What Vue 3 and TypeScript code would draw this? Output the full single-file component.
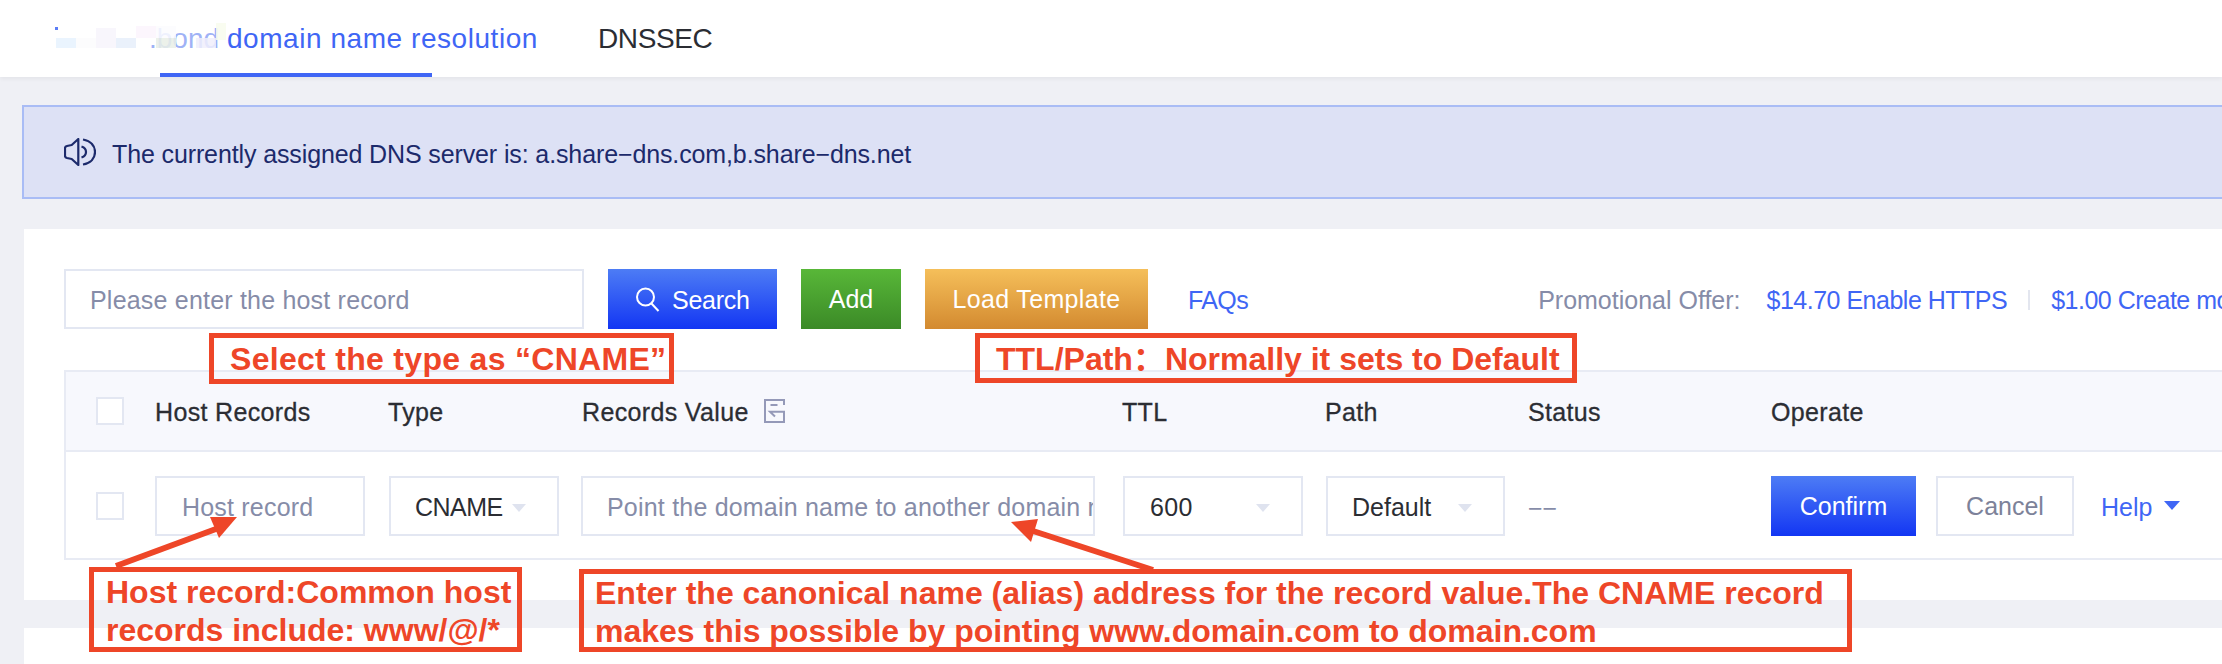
<script setup lang="ts">
const headers = [
  { label: "Host Records", width: 233 },
  { label: "Type", width: 194 },
  { label: "Records Value", width: 540, icon: true },
  { label: "TTL", width: 203 },
  { label: "Path", width: 203 },
  { label: "Status", width: 243 },
  { label: "Operate", width: 300 },
];

const promos = ["$14.70 Enable HTTPS", "$1.00 Create more"];

// pale patches covering the blanked-out start of the first tab
const patches = [
  { x: 55, y: 27, w: 3, h: 3, c: "#3f66f5" },
  { x: 56, y: 38, w: 20, h: 10, c: "#e6f2fe" },
  { x: 76, y: 38, w: 20, h: 10, c: "#fbfbfd" },
  { x: 96, y: 28, w: 20, h: 20, c: "#f7f5fb" },
  { x: 116, y: 38, w: 20, h: 10, c: "#e6eefa" },
  { x: 136, y: 26, w: 20, h: 12, c: "#fbf4fd" },
  { x: 156, y: 26, w: 20, h: 12, c: "#fcfcfe" },
  { x: 156, y: 38, w: 20, h: 10, c: "#e9efe6" },
  { x: 196, y: 38, w: 20, h: 10, c: "#f0effb" },
  { x: 216, y: 23, w: 10, h: 17, c: "#f8fced" },
];
</script>

<template>
  <div class="page">
    <header class="tabs">
      <div class="smudge">
        <em>.bond</em>
        <i
          v-for="(p, i) in patches"
          :key="i"
          :style="{ left: p.x + 'px', top: p.y + 'px', width: p.w + 'px', height: p.h + 'px', background: p.c }"
        ></i>
      </div>
      <div class="tab active"><span>domain name resolution</span></div>
      <div class="tab dnssec">DNSSEC</div>
    </header>

    <div class="notice">
      <svg class="speaker" viewBox="0 0 32 28" fill="none" stroke="#1c2a6b" stroke-width="2.2">
        <path d="M14.3 1 L14.3 27 L7.7 21 L3 20 Q1 19.500 1 18 L1 10 Q1 8.500 3 8 L7.700 7 Z" stroke-linejoin="round" />
        <path d="M19 1.500 C27 3 31 8 31 14 C31 20 27 25 19 26.500" />
        <path d="M17.500 8.500 C20.500 9.500 22 11.500 22 14 C22 16.500 20.500 18.500 17.500 19.500" />
      </svg>
      <span>The currently assigned DNS server is: a.share−dns.com,b.share−dns.net</span>
    </div>

    <section class="card">
      <div class="toolbar">
        <div class="field search-field placeholder"><span>Please enter the host record</span></div>
        <button class="btn blue search-btn">
          <svg width="24" height="25" viewBox="0 0 24 25" fill="none" stroke="#fff" stroke-width="2">
            <circle cx="9.500" cy="10" r="8.500" />
            <path d="M15.500 16.500 L22.500 24" />
          </svg>
          <span class="search-label">Search</span>
        </button>
        <button class="btn green add-btn"><span>Add</span></button>
        <button class="btn orange load-btn"><span>Load Template</span></button>
        <a class="link faq">FAQs</a>
        <span class="promo-label">Promotional Offer:</span>
        <a class="link promo">{{ promos[0] }}</a>
        <span class="divider"></span>
        <a class="link promo">{{ promos[1] }}</a>
      </div>

      <div class="table">
        <div class="row head">
          <span class="check"></span>
          <span v-for="h in headers" :key="h.label" class="th" :style="{ width: h.width + 'px' }">
            {{ h.label }}
            <svg v-if="h.icon" class="col-icon" viewBox="0 0 21 24" fill="none" stroke="#9499b8" stroke-width="2">
              <path d="M20 6 V1 H1 V23 H20 V12.700 H6 L11 17.500" />
              <path d="M6.500 6 H13.500" />
            </svg>
          </span>
        </div>
        <div class="row body">
          <span class="check"></span>
          <div class="field host-field placeholder"><span>Host record</span></div>
          <div class="field select cname-field"><span class="cname">CNAME</span><i class="caret"></i></div>
          <div class="field value-field placeholder"><span>Point the domain name to another domain name</span></div>
          <div class="field select ttl-field"><span class="ttl">600</span><i class="caret"></i></div>
          <div class="field select path-field"><span>Default</span><i class="caret"></i></div>
          <span class="status">−−</span>
          <button class="btn blue confirm-btn"><span>Confirm</span></button>
          <button class="btn plain cancel-btn"><span>Cancel</span></button>
          <a class="link help"><span>Help</span><i class="help-caret"></i></a>
        </div>
      </div>
    </section>

    <div class="gap"></div>
    <div class="next-card"></div>

    <!-- red annotations painted over the screenshot -->
    <div class="note note-type">Select the type as “CNAME”</div>
    <div class="note note-ttl">TTL/Path<span class="cjk">：</span>Normally it sets to Default</div>
    <div class="note note-host">Host record:Common host<br />records include: www/@/*</div>
    <div class="note note-value">
      Enter the canonical name (alias) address for the record value.The CNAME record<br />
      makes this possible by pointing www.domain.com to domain.com
    </div>
    <svg class="arrows" width="2222" height="664" fill="#ee4628" stroke="#ee4628">
      <path d="M116 566 L224 526" stroke-width="6" fill="none" />
      <path d="M237 517 L210 517 L219 538 Z" stroke-width="0" />
      <path d="M1153 570 L1030 530" stroke-width="6" fill="none" />
      <path d="M1011 522 L1038 519 L1031 542 Z" stroke-width="0" />
    </svg>
  </div>
</template>

<style>
html,
body {
  margin: 0;
  background: #eff0f5;
}
</style>

<style scoped>
.page {
  position: relative;
  width: 2222px;
  height: 664px;
  overflow: hidden;
  background: #eff0f5;
  font-family: "Liberation Sans", Arial, sans-serif;
  font-size: 25px;
  color: #2b2d33;
}

.tabs {
  position: relative;
  display: flex;
  height: 77px;
  background: #fff;
  box-shadow: 0 2px 4px rgba(0, 0, 0, 0.05);
  padding-left: 160px;
  gap: 166px;
  font-size: 28px;
}

.tab {
  height: 73px;
  line-height: 78px;
  white-space: nowrap;
}

.tab.active {
  width: 272px;
  color: #3f66f5;
  border-bottom: 4px solid #3f66f5;
  letter-spacing: 0.55px;
}

.tab.active span {
  margin-left: 67px;
}

.dnssec {
  letter-spacing: -0.4px;
}

.smudge {
  position: absolute;
  left: 0;
  top: 0;
}

.smudge em {
  position: absolute;
  left: 149px;
  top: 0;
  font-style: normal;
  line-height: 78px;
  color: #9fb2f6;
}

.smudge i {
  position: absolute;
  display: block;
  opacity: 0.85;
}

.notice {
  display: flex;
  align-items: center;
  height: 94px;
  box-sizing: border-box;
  margin: 28px 0 30px 22px;
  padding-left: 40px;
  background: #dde1f5;
  border: 2px solid #a9bcf5;
  border-right: none;
  color: #1c2a6b;
  white-space: pre;
}

.notice span {
  padding-top: 5px;
  letter-spacing: -0.12px;
}

.speaker {
  width: 32px;
  height: 28px;
  margin-right: 16px;
}

.card {
  margin-left: 24px;
  height: 371px;
  background: #fff;
  padding: 40px 0 0 40px;
  box-sizing: border-box;
}

.toolbar {
  display: flex;
  align-items: center;
  height: 60px;
  white-space: nowrap;
}

.toolbar > a,
.toolbar > .promo-label {
  padding-top: 2px;
}

.field {
  display: flex;
  align-items: center;
  flex-shrink: 0;
  box-sizing: border-box;
  height: 60px;
  background: #fff;
  border: 2px solid #e3e7f2;
  overflow: hidden;
  white-space: nowrap;
}

.field span,
.btn span {
  padding-top: 2px;
}

.placeholder {
  color: #868ca8;
  letter-spacing: 0.2px;
}

.search-field {
  width: 520px;
  padding-left: 24px;
  margin-right: 24px;
}

.btn {
  flex-shrink: 0;
  box-sizing: border-box;
  height: 60px;
  border: none;
  padding: 0;
  font: inherit;
  color: #fff;
}

.blue {
  background: linear-gradient(#4d7cf5, #1336f3);
}

.green {
  background: linear-gradient(#58b738, #3b8a27);
}

.orange {
  background: linear-gradient(#f5bf5a, #d38a30);
}

.plain {
  background: #fff;
  border: 2px solid #e3e7f2;
  color: #7d8299;
}

.search-btn {
  display: flex;
  align-items: center;
  gap: 12px;
  width: 169px;
  margin-right: 24px;
  padding-left: 28px;
}

.search-label {
  letter-spacing: -0.25px;
}

.add-btn {
  width: 100px;
  margin-right: 24px;
}

.load-btn {
  width: 223px;
  margin-right: 40px;
  letter-spacing: 0.35px;
}

.link {
  color: #3f66f5;
}

.faq {
  margin-right: 290px;
  letter-spacing: -0.6px;
}

.promo-label {
  flex-shrink: 0;
  color: #868ca8;
  margin-right: 26px;
}

.promo {
  flex-shrink: 0;
  letter-spacing: -0.5px;
}

.divider {
  flex-shrink: 0;
  width: 2px;
  height: 20px;
  background: #e3e6ef;
  margin: 2px 21px 0;
}

.table {
  margin-top: 41px;
  border: 2px solid #e8ebf4;
  border-right: none;
}

.row {
  display: flex;
  align-items: center;
  padding-left: 30px;
}

.head {
  height: 78px;
  background: #f7f8fd;
  border-bottom: 2px solid #e8ebf4;
}

.body {
  box-sizing: border-box;
  height: 106px;
  padding-top: 2px;
}

.check {
  flex-shrink: 0;
  box-sizing: border-box;
  width: 28px;
  height: 28px;
  margin-right: 31px;
  background: #fff;
  border: 2px solid #e3e7f2;
}

.th {
  display: flex;
  align-items: center;
  flex-shrink: 0;
  color: #2b2d33;
  letter-spacing: 0.35px;
  padding-top: 2px;
  -webkit-text-stroke: 0.3px #2b2d33;
}

.col-icon {
  width: 21px;
  height: 24px;
  margin-left: 15px;
  margin-bottom: 2px;
}

.host-field {
  width: 210px;
  padding-left: 25px;
  margin-right: 24px;
}

.select {
  position: relative;
  padding-left: 24px;
}

.cname {
  letter-spacing: -0.5px;
}

.ttl {
  letter-spacing: 0.3px;
}

.cname-field {
  width: 170px;
  margin-right: 22px;
}

.value-field {
  width: 514px;
  padding-left: 24px;
  margin-right: 28px;
}

.ttl-field {
  width: 180px;
  padding-left: 25px;
  margin-right: 23px;
}

.path-field {
  width: 179px;
  padding-left: 24px;
  margin-right: 23px;
}

.caret {
  position: absolute;
  right: 31px;
  top: 26px;
  border-left: 7.5px solid transparent;
  border-right: 7.5px solid transparent;
  border-top: 8px solid #dfe3ef;
}

.status {
  width: 243px;
  flex-shrink: 0;
  padding-top: 4px;
  color: #868ca8;
}

.confirm-btn {
  width: 145px;
  margin-right: 20px;
}

.cancel-btn {
  width: 138px;
  margin-right: 27px;
}

.help {
  display: flex;
  align-items: center;
  padding-top: 2px;
}

.help-caret {
  margin-left: 12px;
  margin-bottom: 4px;
  border-left: 8px solid transparent;
  border-right: 8px solid transparent;
  border-top: 9px solid #3f66f5;
}

.gap {
  height: 28px;
}

.next-card {
  margin-left: 24px;
  height: 40px;
  background: #fff;
}

.note {
  position: absolute;
  box-sizing: border-box;
  border: 5px solid #ee4628;
  color: #ee4628;
  font-size: 32px;
  font-weight: 700;
  white-space: nowrap;
}

.cjk {
  font-family: "Noto Sans CJK SC", sans-serif;
  line-height: 1;
}

.note-type {
  left: 209px;
  top: 333px;
  width: 465px;
  height: 51px;
  padding-left: 16px;
  line-height: 43px;
  letter-spacing: 0.3px;
}

.note-ttl {
  left: 975px;
  top: 333px;
  width: 602px;
  height: 50px;
  padding-left: 16px;
  line-height: 43px;
}

.note-host {
  left: 89px;
  top: 567px;
  width: 433px;
  height: 85px;
  padding: 1px 0 0 12px;
  line-height: 38px;
}

.note-value {
  left: 579px;
  top: 569px;
  width: 1273px;
  height: 83px;
  padding: 0 0 0 11px;
  line-height: 38px;
}

.arrows {
  position: absolute;
  left: 0;
  top: 0;
  pointer-events: none;
}
</style>
